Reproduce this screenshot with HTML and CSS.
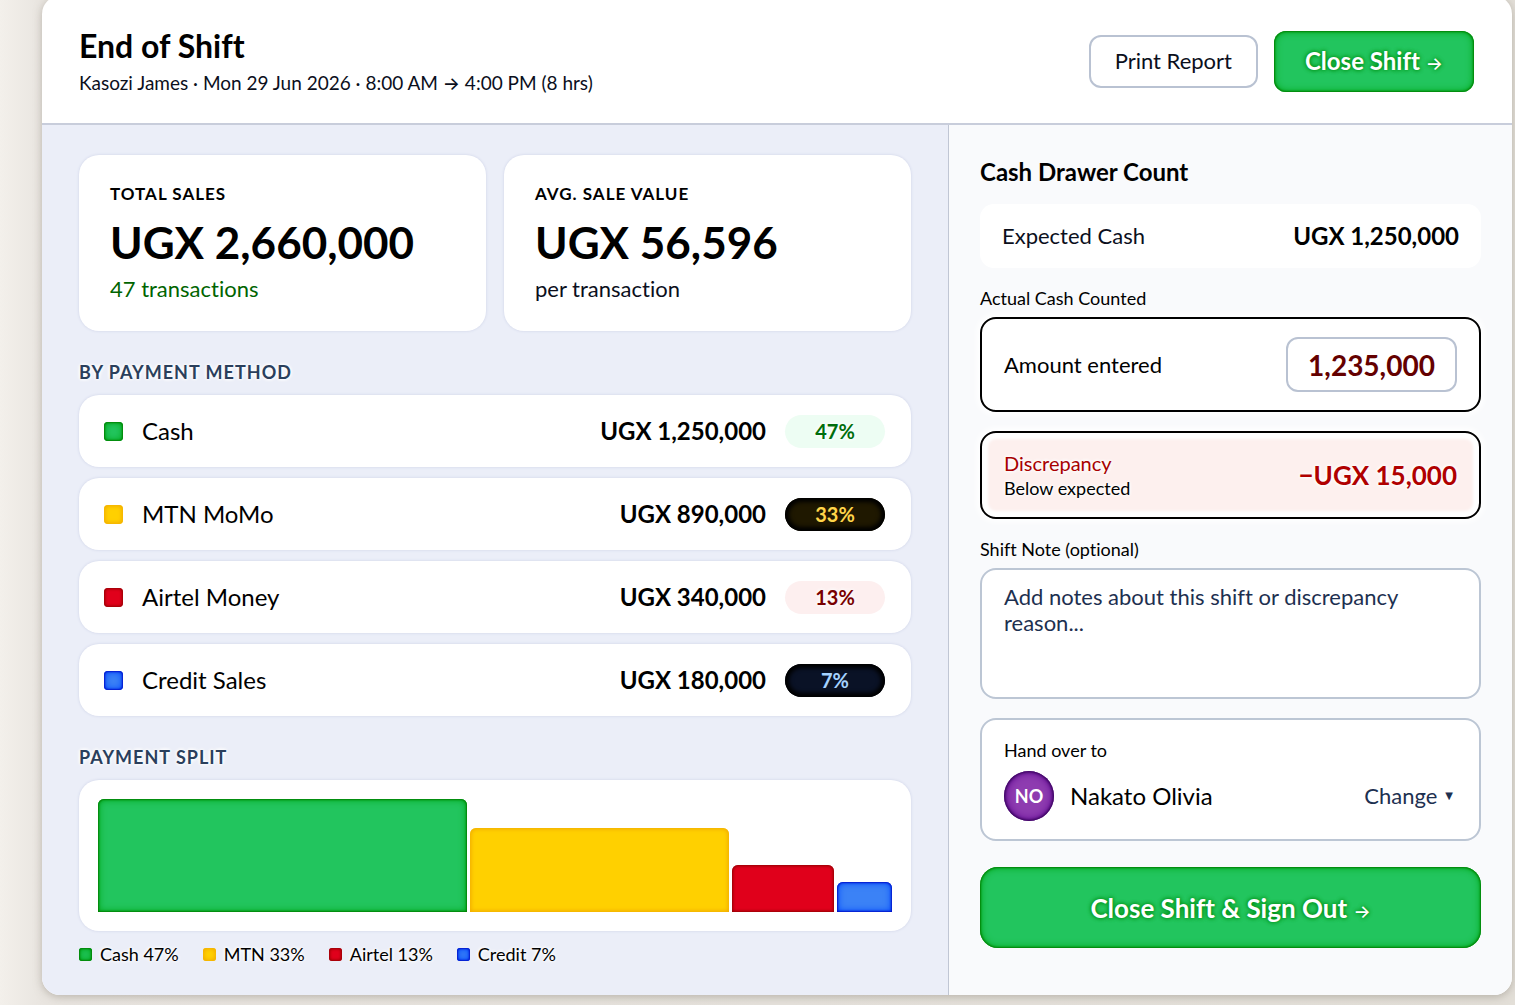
FILE: index.html
```html
<!DOCTYPE html>
<html lang="en">
<head>
  <meta charset="utf-8">
  <meta name="viewport" content="width=device-width, initial-scale=1">
  <title>End of Shift</title>
  <link rel="stylesheet" href="styles.css">
</head>
<body>
  <div class="panel">
    <header class="header">
      <div>
        <h1 class="title">End of Shift</h1>
        <p class="subtitle">Kasozi James · Mon 29 Jun 2026 · 8:00 AM <span class="arrow">→</span> 4:00 PM (8 hrs)</p>
      </div>
      <div class="actions">
        <button class="btn btn-outline" type="button">Print Report</button>
        <button class="btn btn-primary" type="button">Close Shift <span class="arrow">→</span></button>
      </div>
    </header>

    <div class="columns">
      <main class="summary">
        <div class="stats">
          <section class="card stat">
            <h2 class="stat-label">TOTAL SALES</h2>
            <p class="stat-value">UGX 2,660,000</p>
            <p class="stat-note stat-note-good">47 transactions</p>
          </section>
          <section class="card stat">
            <h2 class="stat-label">AVG. SALE VALUE</h2>
            <p class="stat-value">UGX 56,596</p>
            <p class="stat-note">per transaction</p>
          </section>
        </div>

        <h2 class="section-title">BY PAYMENT METHOD</h2>
        <ul class="methods">
          <li class="card method"><span class="swatch green"></span><span class="method-name">Cash</span><span class="method-amount">UGX 1,250,000</span><span class="pill pill-green">47%</span></li>
          <li class="card method"><span class="swatch yellow"></span><span class="method-name">MTN MoMo</span><span class="method-amount">UGX 890,000</span><span class="pill pill-yellow">33%</span></li>
          <li class="card method"><span class="swatch red"></span><span class="method-name">Airtel Money</span><span class="method-amount">UGX 340,000</span><span class="pill pill-red">13%</span></li>
          <li class="card method"><span class="swatch blue"></span><span class="method-name">Credit Sales</span><span class="method-amount">UGX 180,000</span><span class="pill pill-blue">7%</span></li>
        </ul>

        <h2 class="section-title">PAYMENT SPLIT</h2>
        <div class="card chart">
          <div class="bar green" style="flex-grow: 47; height: 100%"></div>
          <div class="bar yellow" style="flex-grow: 33; height: 74%"></div>
          <div class="bar red" style="flex-grow: 13; height: 42%"></div>
          <div class="bar blue" style="flex-grow: 7; height: 27%"></div>
        </div>
        <ul class="legend">
          <li class="legend-item"><span class="dot green"></span>Cash 47%</li>
          <li class="legend-item"><span class="dot yellow"></span>MTN 33%</li>
          <li class="legend-item"><span class="dot red"></span>Airtel 13%</li>
          <li class="legend-item"><span class="dot blue"></span>Credit 7%</li>
        </ul>
      </main>

      <aside class="drawer">
        <h2 class="drawer-title">Cash Drawer Count</h2>
        <div class="expected">
          <span class="expected-label">Expected Cash</span>
          <span class="expected-value">UGX 1,250,000</span>
        </div>

        <h3 class="field-label">Actual Cash Counted</h3>
        <div class="counted">
          <label class="counted-label" for="amount">Amount entered</label>
          <input class="counted-input" id="amount" type="text" inputmode="numeric" value="1,235,000">
        </div>

        <div class="discrepancy">
          <div>
            <p class="discrepancy-title">Discrepancy</p>
            <p class="discrepancy-note">Below expected</p>
          </div>
          <p class="discrepancy-value">−UGX 15,000</p>
        </div>

        <label class="field-label" for="note">Shift Note (optional)</label>
        <textarea class="note" id="note" placeholder="Add notes about this shift or discrepancy reason..."></textarea>

        <section class="handover">
          <h3 class="handover-label">Hand over to</h3>
          <div class="handover-row">
            <span class="avatar">NO</span>
            <span class="handover-name">Nakato Olivia</span>
            <button class="change" type="button">Change <span class="caret">▼</span></button>
          </div>
        </section>

        <button class="btn btn-primary btn-submit" type="button">Close Shift &amp; Sign Out <span class="arrow">→</span></button>
      </aside>
    </div>
  </div>
</body>
</html>
```
FILE: styles.css
```css
* {
  box-sizing: border-box;
}

body,
h1,
h2,
h3,
p,
ul {
  margin: 0;
  padding: 0;
}

ul {
  list-style: none;
}

body {
  padding: 0 3px 10px 42px;
  background: linear-gradient(90deg, #f3f0eb, #e9e5e0 42px, #e3dfd8);
  color: #000;
  font-family: Lato, "Liberation Sans", sans-serif;
  font-size: 20px;
  font-variant-ligatures: none;
  line-height: 26px;
}

button,
input,
textarea {
  font: inherit;
}

.arrow {
  font-family: Inter, sans-serif;
  font-size: 18px;
  font-weight: 500;
  line-height: 1;
}

.panel {
  margin-top: -4px;
  overflow: hidden;
  border-radius: 18px;
  background: #fff;
  box-shadow: 0 2px 8px #8c867a80;
}

.header {
  display: flex;
  align-items: center;
  justify-content: space-between;
  padding: 30px 38px 27px 37px;
  border-bottom: 2px solid #c8cddb;
}

.title {
  font-size: 32px;
  font-weight: 700;
  line-height: 40px;
}

.subtitle {
  padding-top: 4px;
  color: #0b0f1c;
  font-size: 19px;
}

.actions {
  display: flex;
  align-items: center;
  gap: 16px;
}

.btn {
  border-radius: 12px;
  font-size: 22px;
  cursor: pointer;
}

.btn-outline {
  height: 53px;
  padding: 0 24px;
  border: 2px solid #b9c2d2;
  background: #fff;
  color: #0b0f1c;
}

.btn-primary {
  height: 61px;
  padding: 0 31px;
  border: 0;
  background: #22c55e;
  box-shadow: inset 0 0 2px 1px #008000, inset 0 0 7px 1px #00a81a;
  color: #fff;
  font-size: 24px;
  font-weight: 700;
  text-shadow: 0 0 4px #008a10, 0 0 4px #00a020;
}

.columns {
  display: grid;
  grid-template-columns: 906fr 564fr;
}

.summary {
  padding: 30px 37px 29px;
  background: #ebeef8;
}

.card {
  border-radius: 20px;
  background: #fff;
  box-shadow: 0 0 3px #ccd1e6;
}

.stats {
  display: grid;
  grid-template-columns: 1fr 1fr;
  gap: 18px;
}

.stat {
  padding: 27px 31px 29px;
}

.stat-label {
  font-size: 17px;
  font-weight: 700;
  letter-spacing: 1px;
  line-height: 24px;
}

.stat-value {
  padding: 10px 0 8px;
  font-size: 44px;
  font-weight: 700;
  line-height: 52px;
}

.stat-note {
  font-size: 22px;
  color: #0b0f1c;
}

.stat-note-good {
  color: #006400;
}

.section-title {
  padding: 29px 0 11px;
  color: #2a3f5c;
  font-size: 18px;
  font-weight: 700;
  letter-spacing: 1px;
  line-height: 24px;
  text-shadow: 0 0 4px #fff, 0 0 4px #fff, 0 0 3px #fff;
}

.methods {
  display: grid;
  gap: 11px;
}

.method {
  display: flex;
  align-items: center;
  height: 72px;
  padding: 0 26px 0 25px;
}

.swatch {
  width: 19px;
  height: 19px;
  margin-right: 19px;
  border-radius: 4px;
}

.method-name {
  flex: 1;
  font-size: 24px;
}

.method-amount {
  margin-right: 19px;
  font-size: 24px;
  font-weight: 700;
}

.pill {
  width: 100px;
  border-radius: 17px;
  font-size: 20px;
  font-weight: 700;
  line-height: 33px;
  text-align: center;
}

.pill-green {
  background: #edfdf3;
  color: #006e0c;
  text-shadow: 0 0 4px #fff, 0 0 4px #fff;
}

.pill-yellow {
  background: #1f1800;
  box-shadow: inset 0 0 4px 4px #000;
  color: #ffd54a;
}

.pill-red {
  background: #fdefef;
  color: #780000;
  text-shadow: 0 0 4px #fff, 0 0 4px #fff;
}

.pill-blue {
  background: #0a1226;
  box-shadow: inset 0 0 4px 4px #000;
  color: #a5d2ff;
}

.green {
  background: #22c55e;
  box-shadow: inset 0 0 2px 1px #008000, inset 0 0 7px 1px #00a81a;
}

.yellow {
  background: #ffd000;
  box-shadow: inset 0 0 4px 1px #f0a800;
}

.red {
  background: #e0001b;
  box-shadow: inset 0 0 3px 1px #900000;
}

.blue {
  background: #3b82f6;
  box-shadow: inset 0 0 2px 1px #0010c8, inset 0 0 7px 1px #0048ff;
}

.chart {
  display: flex;
  align-items: flex-end;
  gap: 3px;
  height: 151px;
  padding: 19px;
}

.bar {
  flex-basis: 0;
  border-radius: 6px 6px 0 0;
}

.legend {
  display: flex;
  gap: 24px;
  padding-top: 11px;
  font-size: 18px;
  line-height: 24px;
  text-shadow: 0 0 4px #fff, 0 0 4px #fff, 0 0 3px #fff;
}

.legend-item {
  display: flex;
  align-items: center;
}

.dot {
  width: 13px;
  height: 13px;
  margin-right: 8px;
  border-radius: 3px;
}

.drawer {
  padding: 34px 31px;
  border-left: 1px solid #c0c6d4;
  background: #f9fafc;
}

.drawer-title {
  padding-bottom: 19px;
  font-size: 24px;
  font-weight: 700;
}

.expected {
  display: flex;
  align-items: center;
  justify-content: space-between;
  height: 64px;
  padding: 0 22px;
  border-radius: 14px;
  background: #fff;
}

.expected-label {
  color: #0b0f1c;
  font-size: 22px;
}

.expected-value {
  font-size: 24px;
  font-weight: 700;
}

.field-label {
  display: block;
  padding: 18px 0 7px;
  font-size: 18px;
  font-weight: 400;
  line-height: 24px;
}

.counted,
.discrepancy {
  display: flex;
  align-items: center;
  justify-content: space-between;
  padding: 0 22px;
  border: 2px solid #000;
  border-radius: 16px;
  background: #fff;
  box-shadow: 0 0 6px 3px #fff;
}

.counted {
  height: 95px;
}

.counted-label {
  font-size: 22px;
}

.counted-input {
  width: 171px;
  height: 55px;
  padding: 0;
  border: 2px solid #b9c2d2;
  border-radius: 12px;
  background: #fff;
  color: #640000;
  font-size: 28px;
  font-weight: 700;
  text-align: center;
}

.discrepancy {
  height: 88px;
  margin-top: 19px;
  background: #fdf0ee;
  box-shadow: 0 0 6px 3px #fff, inset 0 0 3px 6px #fff;
  text-shadow: 0 0 4px #fff, 0 0 4px #fff, 0 0 3px #fff;
}

.discrepancy-title {
  color: #a80000;
}

.discrepancy-note {
  font-size: 18px;
  line-height: 24px;
}

.discrepancy-value {
  color: #b00000;
  font-size: 26px;
  font-weight: 700;
}

.note {
  display: block;
  width: 100%;
  height: 131px;
  padding: 14px 22px;
  border: 2px solid #bcc6d4;
  border-radius: 16px;
  background: #fff;
  font-size: 22px;
  resize: none;
}

.note::placeholder {
  color: #1d3050;
  opacity: 1;
}

.handover {
  margin: 19px 0 26px;
  padding: 18px 22px;
  border: 2px solid #bcc6d4;
  border-radius: 16px;
  background: #fff;
}

.handover-label {
  font-size: 18px;
  font-weight: 400;
  line-height: 24px;
}

.handover-row {
  display: flex;
  align-items: center;
  padding-top: 9px;
}

.avatar {
  width: 50px;
  margin-right: 16px;
  border-radius: 50%;
  background: #8e3cb0;
  box-shadow: inset 0 0 3px 1px #2e0050, inset 0 0 8px 1px #5c0090;
  color: #fff;
  font-size: 18px;
  font-weight: 700;
  line-height: 50px;
  text-align: center;
}

.handover-name {
  flex: 1;
  font-size: 24px;
}

.change {
  display: flex;
  align-items: center;
  gap: 8px;
  padding: 0 4px;
  border: 0;
  background: none;
  color: #1d3050;
  font-size: 22px;
  cursor: pointer;
}

.caret {
  font-family: "DejaVu Sans", sans-serif;
  font-size: 10px;
}

.btn-submit {
  display: block;
  width: 100%;
  height: 81px;
  border-radius: 18px;
  font-size: 26px;
}
```
